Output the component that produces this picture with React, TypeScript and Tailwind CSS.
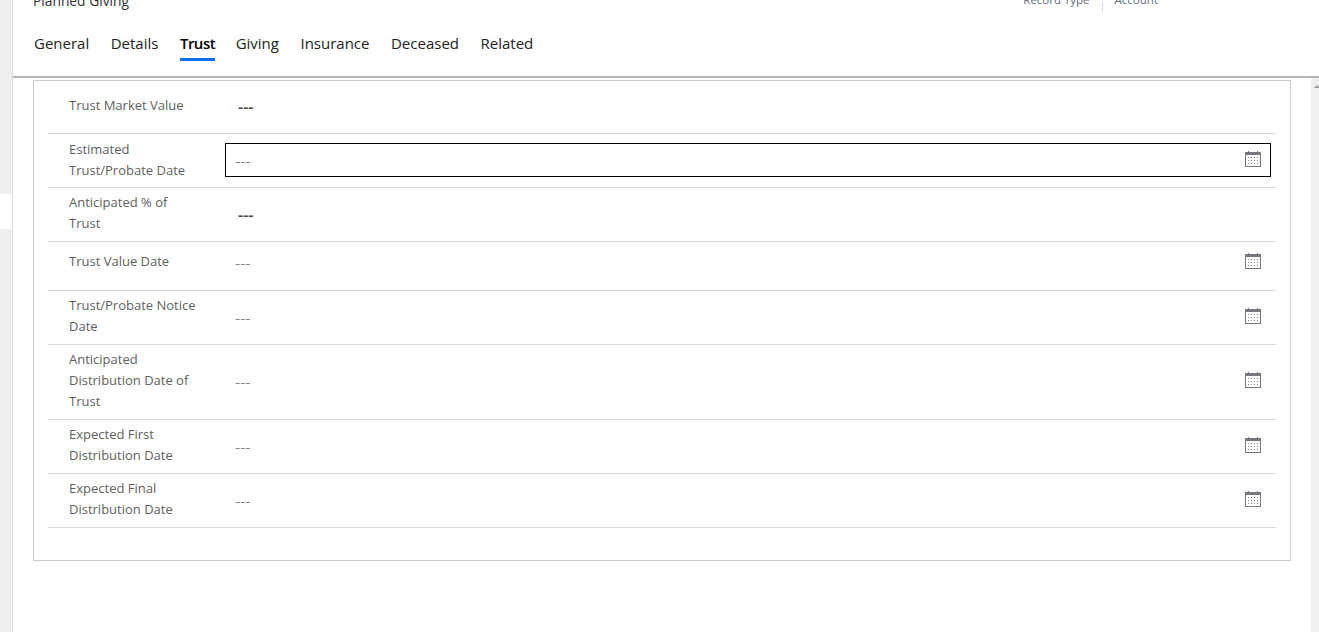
const font = { fontFamily: '"Open Sans", "Noto Sans", sans-serif' };

const tabs = ['General', 'Details', 'Trust', 'Giving', 'Insurance', 'Deceased', 'Related'];

type Field = {
  label: string[];
  height: string;
  labelPad: string;
  kind: 'text' | 'date' | 'focus';
  valuePad?: string;
};

const fields: Field[] = [
  { label: ['Trust Market Value'], height: 'h-[53px]', labelPad: 'pt-[14px]', kind: 'text' },
  { label: ['Estimated', 'Trust/Probate Date'], height: 'h-[54px]', labelPad: 'pt-[5px]', kind: 'focus' },
  { label: ['Anticipated % of', 'Trust'], height: 'h-[54px]', labelPad: 'pt-1', kind: 'text' },
  { label: ['Trust Value Date'], height: 'h-[49px]', labelPad: 'pt-[9px]', kind: 'date', valuePad: 'pb-[6px]' },
  { label: ['Trust/Probate Notice', 'Date'], height: 'h-[54px]', labelPad: 'pt-1', kind: 'date' },
  { label: ['Anticipated', 'Distribution Date of', 'Trust'], height: 'h-[75px]', labelPad: 'pt-1', kind: 'date' },
  { label: ['Expected First', 'Distribution Date'], height: 'h-[54px]', labelPad: 'pt-1', kind: 'date' },
  { label: ['Expected Final', 'Distribution Date'], height: 'h-[54px]', labelPad: 'pt-1', kind: 'date' },
];

function CalendarIcon({ className = '' }: { className?: string }) {
  return (
    <svg width="16" height="16" viewBox="0 0 16 16" className={`shrink-0 ${className}`} fill="none">
      <rect x="0.5" y="1.5" width="15" height="14" stroke="#77777f" />
      <rect x="1" y="2" width="14" height="2" fill="#77777f" />
      <rect x="3" y="0" width="1" height="3" fill="#77777f" />
      <rect x="12" y="0" width="1" height="3" fill="#77777f" />
      <g fill="#8a8096">
        {[6, 9, 12].map((y) =>
          [3, 6, 9, 12].map((x) => <rect key={`${x}-${y}`} x={x} y={y} width="1" height="1" />)
        )}
      </g>
    </svg>
  );
}

function Row({ field }: { field: Field }) {
  return (
    <div className={`flex border-b border-[#d8d8d8] ${field.height}`}>
      <div className={`w-[177px] shrink-0 pl-[21px] text-[13px] leading-[21px] text-[#5f5f5f] ${field.labelPad}`}>
        {field.label.map((line) => (
          <div key={line} className="whitespace-nowrap">{line}</div>
        ))}
      </div>
      {field.kind === 'text' && (
        <div className="flex flex-1 items-center pl-[13px] text-[16px] font-semibold text-[#444]">---</div>
      )}
      {field.kind === 'date' && (
        <div className={`flex flex-1 items-center justify-between pl-[10px] pr-[15px] ${field.valuePad ?? ''}`}>
          <span className="text-[16px] font-light text-[#666]">---</span>
          <CalendarIcon className="mb-[4px]" />
        </div>
      )}
      {field.kind === 'focus' && (
        <div className="flex flex-1 items-center">
          <div className="mb-[2px] mr-[5px] flex h-[34px] flex-1 items-center justify-between border border-black pl-[9px] pr-[9px]">
            <span className="pt-[2px] text-[16px] font-light text-[#666]">---</span>
            <CalendarIcon className="mb-[2px]" />
          </div>
        </div>
      )}
    </div>
  );
}

export default function App() {
  return (
    <div className="flex h-[632px] w-[1319px] overflow-hidden bg-white" style={font}>
      <div className="flex w-[13px] shrink-0 flex-col border-r border-[#dcdcdc] bg-[#eeeeee]">
        <div className="mt-[194px] h-[35px] bg-white" />
      </div>

      <div className="flex min-w-0 flex-1 flex-col">
        <div className="h-[78px] shrink-0 border-b-2 border-[#b4b4b4] pl-[20px]">
          <div className="flex h-[12px] items-end justify-between">
            <span className="mb-[1px] whitespace-nowrap text-[13.8px] font-medium leading-[20px] text-[#333]">
              Planned Giving
            </span>
            <div className="mr-[161px] flex h-[10px] items-end text-[11.5px] leading-[18px] text-[#5f6a80]">
              <span className="mb-[3px] whitespace-nowrap">Record Type</span>
              <span className="mx-3 h-[10px] border-l border-[#d8d8d8]" />
              <span className="mb-[3px] whitespace-nowrap">Account</span>
            </div>
          </div>
          <div className="ml-px mt-[19px] flex gap-[21.5px] text-[15px] leading-[24px] text-[#222]">
            {tabs.map((tab) => (
              <div key={tab} className={tab === 'Trust' ? 'relative -mr-px whitespace-nowrap' : 'relative whitespace-nowrap'}>
                <span className={tab === 'Trust' ? 'font-semibold tracking-[-0.5px] text-black' : ''}>{tab}</span>
                {tab === 'Trust' && (
                  <div className="absolute left-0 right-0 top-[27px] h-[3px] bg-[#0f6cf5]" />
                )}
              </div>
            ))}
          </div>
        </div>

        <div className="flex min-h-0 flex-1">
          <div className="flex-1 pl-[20px] pr-[20px] pt-[2px]">
            <div className="h-[481px] border border-[#cccccc] pl-[14px] pr-[14px]">
              {fields.map((field) => (
                <Row key={field.label.join(' ')} field={field} />
              ))}
            </div>
          </div>
          <div className="relative w-[8px] shrink-0 bg-[#f0f0f0]">
            <div className="absolute left-[3px] top-[7px] h-0 w-0 border-x-[3px] border-b-[3px] border-x-transparent border-b-[#9a9a9a]" />
          </div>
        </div>
      </div>
    </div>
  );
}
